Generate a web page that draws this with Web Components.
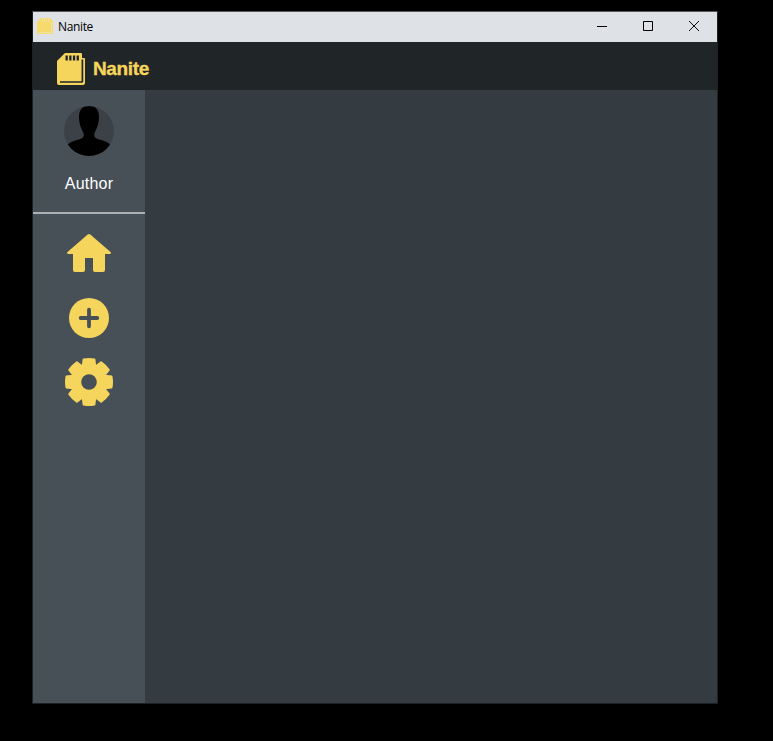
<!DOCTYPE html>
<html lang="en">
<head>
<meta charset="utf-8">
<title>Nanite</title>
<style>
  html, body { margin: 0; height: 100%; background: #000; overflow: hidden; }
  body { font-family: "Liberation Sans", Arial, sans-serif; box-sizing: border-box; padding: 11px 55px 37px 32px; --yellow: #f6d55c; --panel: #485057; }
</style>
</head>
<body>
<app-window>
  <title-bar slot="title">Nanite</title-bar>
  <brand-bar slot="header">Nanite</brand-bar>
  <side-bar slot="sidebar">
    <user-card>Author</user-card>
    <nav-icon name="home"></nav-icon>
    <nav-icon name="add"></nav-icon>
    <nav-icon name="settings"></nav-icon>
  </side-bar>
</app-window>
<script>
const card = `<svg viewBox="0 0 28 32">
  <path fill="currentColor" d="M8 0H24Q25 0 25 1V5H27Q28 5 28 6V30Q28 32 26 32H2Q0 32 0 30V8Z"/>
  <path fill="var(--ink)" d="M8.500 2.500h2.300v5H8.500zM12.200 2.500h2.300v5h-2.300zM15.900 2.500h2.300v5h-2.300zM19.600 2.500h2.300v5h-2.300z"/>
  <path fill="none" stroke="var(--ink)" stroke-width="1.700" d="M25.400 6.500V28.400Q25.400 29 24.800 29H3"/>
</svg>`;

const define = (name, html, setup) => customElements.define(name, class extends HTMLElement {
  constructor() {
    super();
    this.attachShadow({ mode: "open" }).innerHTML = html;
  }
  connectedCallback() { if (setup) setup(this); }
});

define("app-window", `<style>
  :host { display: grid; grid-template: 30px 48px 1fr / 112px 1fr; box-sizing: border-box; height: 100%;
    border: 1px solid #1d2124; border-top-color: #55585b; background: #343b41; }
  .title, .header { grid-column: 1 / 3; display: grid; }
  .side { display: grid; }
</style>
<div class="title"><slot name="title"></slot></div>
<div class="header"><slot name="header"></slot></div>
<div class="side"><slot name="sidebar"></slot></div>
<main></main>`);

define("title-bar", `<style>
  :host { display: flex; align-items: center; background: #dee1e6; color: #000; --ink: #efe2a6; }
  .icon { display: flex; margin: 0 5px 2px 4px; color: #f7da6c; }
  .icon svg { width: 16px; height: 16px; }
  .name { font: 12px/16px "Open Sans", "Noto Sans", sans-serif; flex: 1; letter-spacing: -.35px; }
  .controls { display: flex; padding-bottom: 1px; }
  .controls svg { width: 46px; height: 29px; }
</style>
<span class="icon"><svg viewBox="0 0 16 16">
  <path fill="currentColor" d="M4 0H14V2H16V15Q16 16 15 16H1Q0 16 0 15V4Z"/>
  <path fill="none" stroke="var(--ink)" d="M5.500 1v3M7.500 1v3M9.500 1v3M11.500 1v3M14.500 4v10.500H1"/>
</svg></span>
<span class="name"><slot></slot></span>
<span class="controls">
  <svg viewBox="0 0 46 29"><path stroke="#000" d="M18 14.500h10"/></svg>
  <svg viewBox="0 0 46 29"><path fill="none" stroke="#000" d="M18.500 9.500h9v9h-9z"/></svg>
  <svg viewBox="0 0 46 29"><path stroke="#000" stroke-width=".95" d="M18 9l10 10M28 9L18 19"/></svg>
</span>`);

define("brand-bar", `<style>
  :host { display: flex; align-items: center; gap: 8px; padding: 0 24px; background: #202528; color: var(--yellow); --ink: #202528; }
  .logo { display: flex; padding-top: 6px; }
  svg { width: 28px; height: 32px; }
  .name { font: bold 19px/24px "Liberation Sans", Arial, sans-serif; letter-spacing: -.35px; padding-top: 5px; -webkit-text-stroke: .35px currentColor; }
</style>
<span class="logo">${card}</span><span class="name"><slot></slot></span>`);

define("side-bar", `<style>
  :host { display: flex; flex-direction: column; background: var(--panel); }
</style><slot></slot>`);

define("user-card", `<style>
  :host { display: flex; flex-direction: column; align-items: center; box-sizing: border-box; height: 124px;
    padding-top: 16px; border-bottom: 2px solid #adb0b2; margin-bottom: 8px; color: #fff; font-size: 16px; line-height: 24px; }
  svg { width: 50px; height: 50px; margin-bottom: 16px; border-radius: 50%; background: #3c4148; }
  span { letter-spacing: .2px; }
</style>
<svg viewBox="0 0 50 50"><path d="M25 0C31 0 35.200 3 35 11C35 19 32 24 30.500 27C29.500 31 31 32.500 37 34C42 35.500 45 36.500 46.500 39V50H3.500V39C5 36.500 8 35.500 13 34C19 32.500 20.500 31 19.500 27C18 24 15 19 15 11C15 3 19 0 25 0Z"/></svg>
<span><slot></slot></span>`);

const tooth = [0, 45, 90, 135, 180, 225, 270, 315].map(a =>
  `<path transform="rotate(${a})" d="M-7.200 -16L-6.400 -22.700Q-6.200 -23.400 -5.500 -23.500Q0 -24.500 5.500 -23.500Q6.200 -23.400 6.400 -22.700L7.200 -16Z"/>`).join("");
const icons = {
  home: `<path d="M22.700 4.600Q24 3.400 25.300 4.600L45.500 22Q46.700 23.500 45 24H40V40Q40 42 38 42H30Q28 42 28 40V28H20V40Q20 42 18 42H10Q8 42 8 40V24H3Q1.300 23.500 2.500 22Z"/>`,
  add: `<circle cx="24" cy="24" r="20"/><path d="M24 15.700V32.300M15.700 24H32.300" stroke="var(--panel)" stroke-width="3.800" stroke-linecap="round"/>`,
  settings: `<g transform="translate(24 24)"><circle r="18.500"/>${tooth}<circle r="7.800" fill="var(--panel)"/></g>`
};

define("nav-icon", `<style>
  :host { display: flex; justify-content: center; padding: 8px 0; color: var(--yellow); }
  svg { width: 48px; height: 48px; fill: currentColor; }
</style><svg viewBox="0 0 48 48"></svg>`, el => {
  el.shadowRoot.querySelector("svg").innerHTML = icons[el.getAttribute("name")];
});
</script>
</body>
</html>
